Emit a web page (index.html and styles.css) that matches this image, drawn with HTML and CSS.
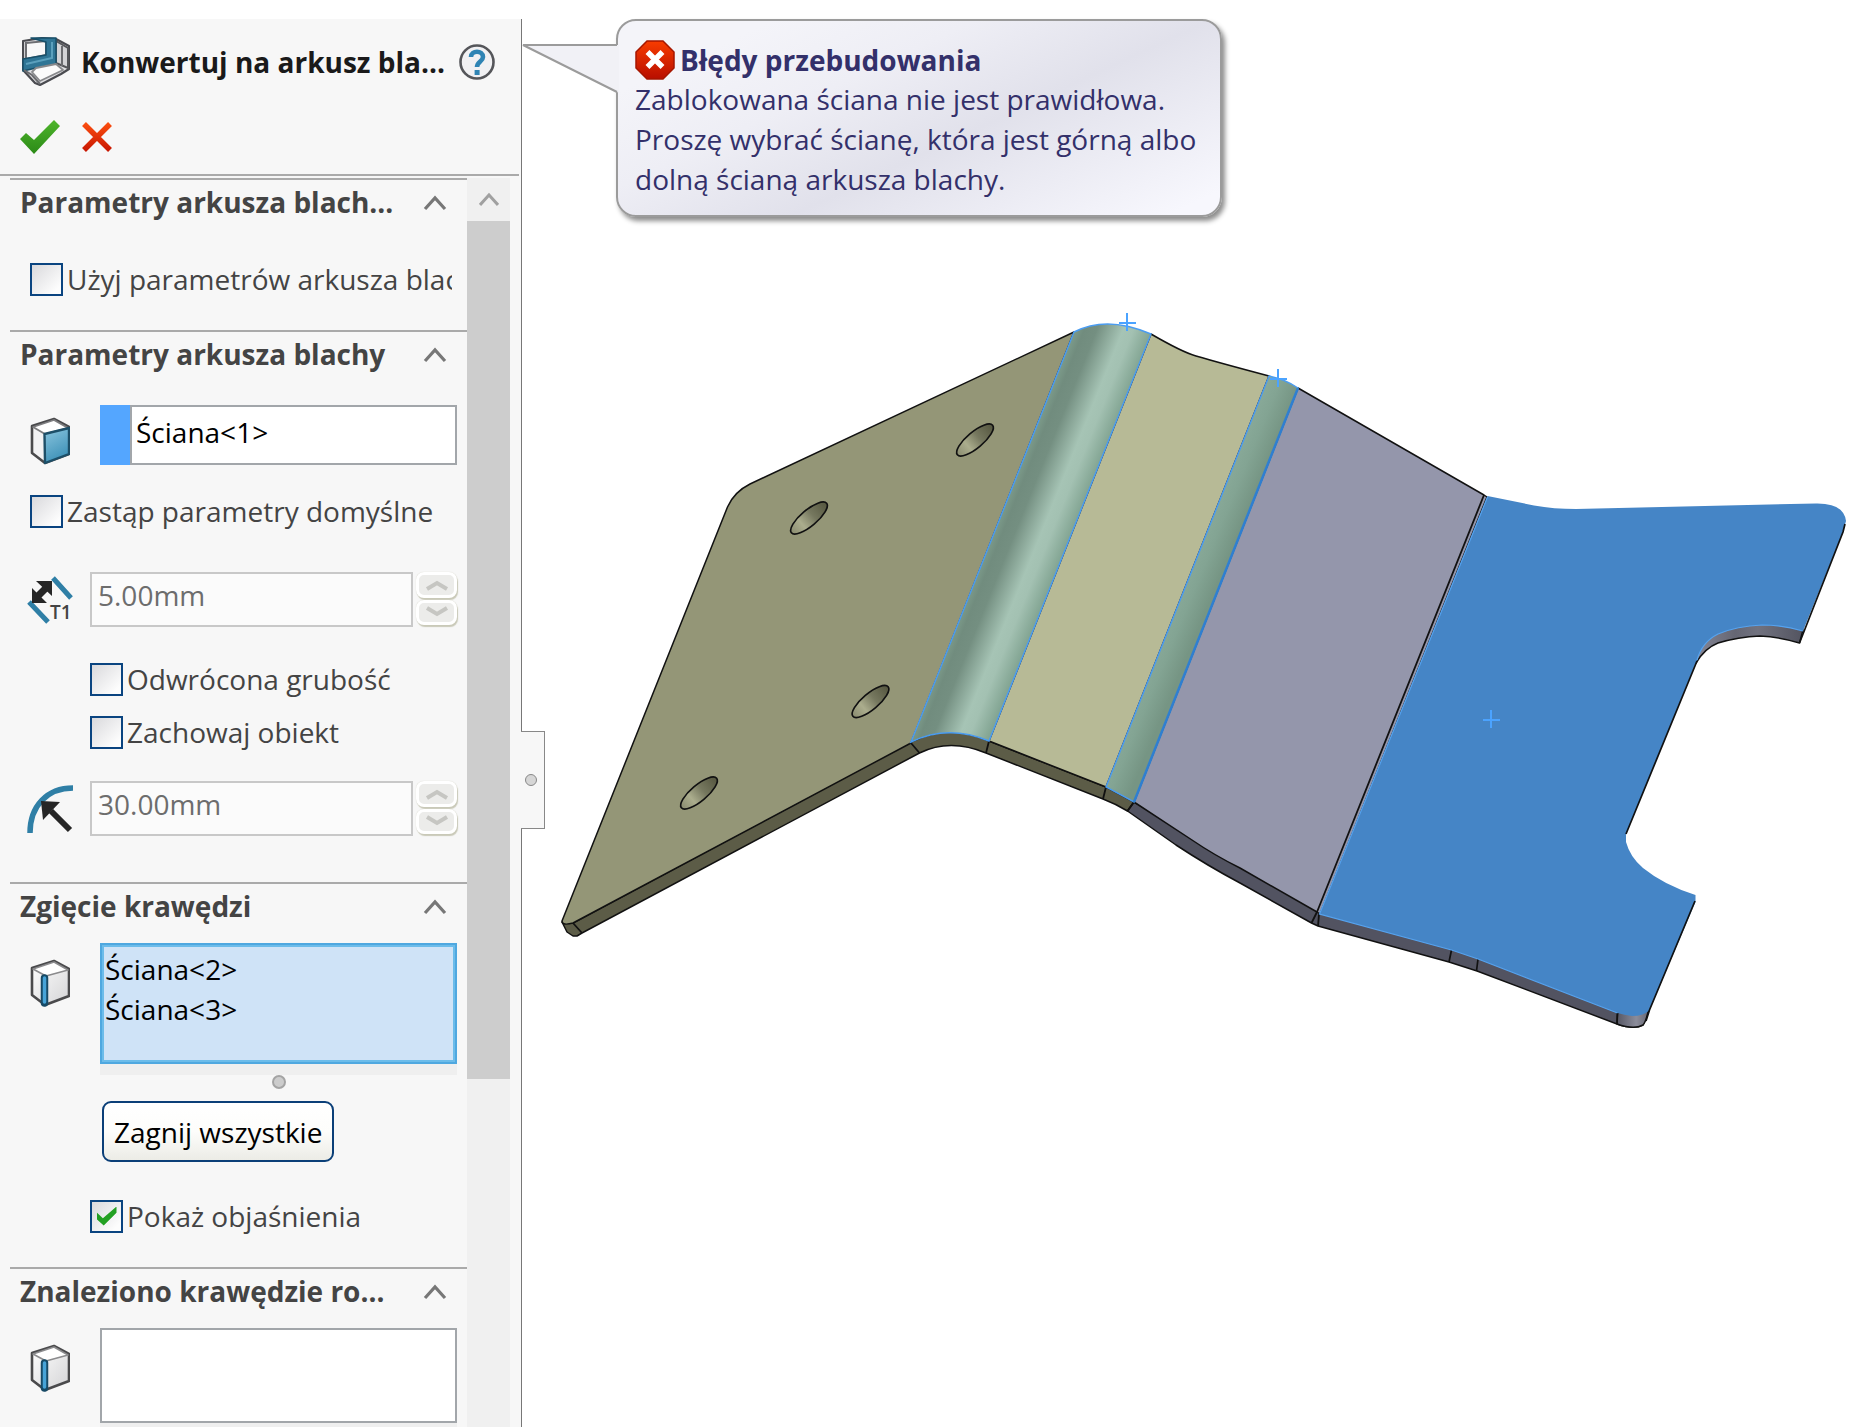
FILE: index.html
```html
<!DOCTYPE html>
<html lang="pl">
<head>
<meta charset="utf-8">
<meta name="viewport" content="width=device-width, initial-scale=1">
<title>Konwertuj na arkusz blachy</title>
<link rel="stylesheet" href="styles.css">
</head>
<body>
<svg width="0" height="0" class="defs" aria-hidden="true">
  <defs>
    <linearGradient id="boxShade" x1="0" y1="0" x2="1" y2="1"><stop offset="0" stop-color="#fff"/><stop offset="1" stop-color="#d4d4d6"/></linearGradient>
    <linearGradient id="faceBlue" x1="0" y1="0" x2="0.4" y2="1"><stop offset="0" stop-color="#8cc6df"/><stop offset="1" stop-color="#3f92b8"/></linearGradient>
    <symbol id="edgeBox" viewBox="0 0 40 48">
      <path d="M2 9 L24 2 L39 10 V37 L15 46 L2 36 Z" fill="url(#boxShade)" stroke="#4a4a4c" stroke-width="2.6" stroke-linejoin="round"/>
      <path d="M3 10 L16 17 L38 11 L24 3 Z" fill="#fff" stroke="#8b8b8d" stroke-width="1.6" stroke-linejoin="round"/>
      <path d="M14.500 19 V44" stroke="#174a66" stroke-width="7.500" stroke-linecap="round"/>
      <path d="M14.500 19 V43" stroke="#47a4d8" stroke-width="3.500" stroke-linecap="round"/>
    </symbol>
    <symbol id="chevUp" viewBox="0 0 24 16"><path d="M2 14 L12 3 L22 14" fill="none" stroke="currentColor" stroke-width="3.200"/></symbol>
    <symbol id="spinUp" viewBox="0 0 24 12"><path d="M2 10 L12 4 L22 10" fill="none" stroke="currentColor" stroke-width="4"/></symbol>
    <symbol id="spinDown" viewBox="0 0 24 12"><path d="M2 2 L12 8 L22 2" fill="none" stroke="currentColor" stroke-width="4"/></symbol>
  </defs>
</svg>
<div class="app">
  <aside class="panel">
    <header class="panel-head">
      <div class="title-row">
        <svg class="feature-icon" viewBox="0 0 48 50" aria-hidden="true">
          <path d="M1 4 L20 1 L34 2 L47 9 V32 L39 37 L18 48 L13 46 L1 33 Z" fill="#dfdfe2" stroke="#4a4b50" stroke-width="2.200" stroke-linejoin="round"/>
          <path d="M4 6 L24 4 V18 L4 22 Z" fill="#f8f8f8" stroke="#6d6e72" stroke-width="2"/>
          <path d="M34 4 L46 11 V31 L34 26 Z" fill="#d3d3d6" stroke="#55565a" stroke-width="2"/>
          <path d="M40 9 V29" stroke="#6b6c70" stroke-width="2"/>
          <path d="M9 1 L34 1 V27 L14 31 L1 34 V22 L24 18 V5 Z" fill="#2f7595" stroke="#174f69" stroke-width="1.500" stroke-linejoin="round"/>
          <path d="M30 5 V21 L4 27" fill="none" stroke="#5ba0bd" stroke-width="2"/>
          <path d="M14 31 L34 27 L41 33 L18 44 L10 35 Z" fill="#fbfbfb" stroke="#88898c" stroke-width="1.800" stroke-linejoin="round"/>
          <path d="M2 33 L10 38 L18 47" fill="none" stroke="#6a6b6f" stroke-width="2"/>
        </svg>
        <h1>Konwertuj na arkusz bla...</h1>
        <button type="button" class="icon-btn" aria-label="Pomoc">
          <svg width="36" height="38" viewBox="0 0 36 38"><circle cx="18" cy="19" r="16.500" fill="#f1f1f3" stroke="#55565a" stroke-width="2.600"/><path d="M12 14 C12 7 24 7 24 14 C24 18.500 18 18.500 18 24" fill="none" stroke="#2f84b4" stroke-width="4.600"/><rect x="15.600" y="27" width="5" height="5" fill="#2f84b4"/></svg>
        </button>
      </div>
      <div class="actions">
        <button type="button" class="icon-btn" aria-label="OK"><svg width="41" height="34" viewBox="0 0 41 34"><defs><linearGradient id="ok" x1="0" y1="0" x2="0" y2="1"><stop offset="0" stop-color="#4fb52c"/><stop offset="1" stop-color="#2b8a17"/></linearGradient></defs><path d="M0 19 L6 13 L14 20 L34 0 L40 6 L14 34 Z" fill="url(#ok)"/></svg></button>
        <button type="button" class="icon-btn" aria-label="Anuluj"><svg width="32" height="32" viewBox="0 0 32 32"><defs><linearGradient id="no" gradientUnits="userSpaceOnUse" x1="0" y1="0" x2="0" y2="32"><stop offset="0" stop-color="#ff5210"/><stop offset="1" stop-color="#c41200"/></linearGradient></defs><path d="M3 3 L29 29 M29 3 L3 29" stroke="url(#no)" stroke-width="5.500"/></svg></button>
      </div>
    </header>
    <div class="panel-body">
      <div class="groups">
        <section class="group">
          <div class="group-head"><h2>Parametry arkusza blach...</h2><button type="button" class="icon-btn chev" aria-label="Zwiń"><svg width="24" height="16"><use href="#chevUp"/></svg></button></div>
          <label class="check first"><input type="checkbox"><span>Użyj parametrów arkusza blachy</span></label>
        </section>

        <section class="group params">
          <div class="group-head"><h2>Parametry arkusza blachy</h2><button type="button" class="icon-btn chev" aria-label="Zwiń"><svg width="24" height="16"><use href="#chevUp"/></svg></button></div>
          <div class="field pick">
            <svg class="field-icon" width="40" height="48" viewBox="0 0 40 48" aria-hidden="true">
              <path d="M2 9 L24 2 L39 10 V37 L15 46 L2 36 Z" fill="#f2f2f3" stroke="#4a4a4c" stroke-width="2.6" stroke-linejoin="round"/>
              <path d="M3 10 L15 17 L38 11 L24 3 Z" fill="#fff" stroke="#7d7d7f" stroke-width="1.8" stroke-linejoin="round"/>
              <path d="M14.500 17 L39 11 V37 L15 46 Z" fill="url(#faceBlue)" stroke="#1d4f68" stroke-width="2.4" stroke-linejoin="round"/>
            </svg>
            <div class="picked"><span class="swatch"></span><input type="text" aria-label="Stała ściana" value="Ściana&lt;1&gt;"></div>
          </div>
          <label class="check override"><input type="checkbox"><span>Zastąp parametry domyślne</span></label>
          <div class="field number">
            <svg class="field-icon" width="46" height="48" viewBox="0 0 46 48" aria-hidden="true">
              <path d="M26 2 L44 22 M2 26 L21 46" stroke="#2f7fa6" stroke-width="5" fill="none"/>
              <path d="M8 23 L21 10" stroke="#262626" stroke-width="7"/>
              <path d="M9 5 L25 5 L25 20 Z M5 12 V27 L20 27 Z" fill="#262626"/>
              <text x="23" y="43" class="icon-text">T1</text>
            </svg>
            <input type="text" aria-label="Grubość" value="5.00mm" disabled>
            <div class="spin"><button type="button" disabled aria-label="Więcej"><svg width="24" height="12"><use href="#spinUp"/></svg></button><button type="button" disabled aria-label="Mniej"><svg width="24" height="12"><use href="#spinDown"/></svg></button></div>
          </div>
          <label class="check inset reverse"><input type="checkbox"><span>Odwrócona grubość</span></label>
          <label class="check inset keep"><input type="checkbox"><span>Zachowaj obiekt</span></label>
          <div class="field number radius">
            <svg class="field-icon" width="46" height="50" viewBox="0 0 46 50" aria-hidden="true">
              <path d="M3 49 C3 22 20 4 46 4" fill="none" stroke="#2f7fa6" stroke-width="5.500"/>
              <path d="M43 46 L24 27" stroke="#262626" stroke-width="6"/><path d="M14 17 L33 18 L16 36 Z" fill="#262626"/>
            </svg>
            <input type="text" aria-label="Promień" value="30.00mm" disabled>
            <div class="spin"><button type="button" disabled aria-label="Więcej"><svg width="24" height="12"><use href="#spinUp"/></svg></button><button type="button" disabled aria-label="Mniej"><svg width="24" height="12"><use href="#spinDown"/></svg></button></div>
          </div>
        </section>

        <section class="group bends">
          <div class="group-head"><h2>Zgięcie krawędzi</h2><button type="button" class="icon-btn chev" aria-label="Zwiń"><svg width="24" height="16"><use href="#chevUp"/></svg></button></div>
          <div class="field list">
            <svg class="field-icon" width="40" height="48" aria-hidden="true"><use href="#edgeBox"/></svg>
            <div class="list-wrap">
              <ul class="listbox active"><li>Ściana&lt;2&gt;</li><li>Ściana&lt;3&gt;</li></ul>
              <div class="grip"></div><span class="dot"></span>
            </div>
          </div>
          <button type="button" class="push">Zagnij wszystkie</button>
          <label class="check inset callouts"><input type="checkbox" checked><span>Pokaż objaśnienia</span></label>
        </section>

        <section class="group rips">
          <div class="group-head"><h2>Znaleziono krawędzie ro...</h2><button type="button" class="icon-btn chev" aria-label="Zwiń"><svg width="24" height="16"><use href="#chevUp"/></svg></button></div>
          <div class="field list">
            <svg class="field-icon" width="40" height="48" aria-hidden="true"><use href="#edgeBox"/></svg>
            <div class="list-wrap"><ul class="listbox"></ul><div class="grip short"></div></div>
          </div>
        </section>
      </div>
      <div class="scroll"><button type="button" class="scroll-up" aria-label="W górę"><svg width="20" height="16" viewBox="0 0 20 16"><path d="M1 13 L10 3 L19 13" fill="none" stroke="#a0a0a0" stroke-width="3"/></svg></button><div class="thumb"></div></div>
    </div>
    <div class="tab"><span class="tab-dot"></span></div>
  </aside>

  <main class="canvas">
    <svg class="model" viewBox="522 19 1333 1408" role="img" aria-label="Model arkusza blachy">
      <defs>
        <linearGradient id="bendA" gradientUnits="userSpaceOnUse" x1="1074" y1="332" x2="1141" y2="359"><stop offset="0" stop-color="#7c9b8a"/><stop offset=".12" stop-color="#718c7e"/><stop offset=".28" stop-color="#748f81"/><stop offset=".62" stop-color="#a6c4b5"/><stop offset=".75" stop-color="#a3c1b2"/><stop offset="1" stop-color="#83a593"/></linearGradient>
        <linearGradient id="bendB" gradientUnits="userSpaceOnUse" x1="1269" y1="376" x2="1298" y2="388"><stop offset="0" stop-color="#88a998"/><stop offset=".4" stop-color="#83a493"/><stop offset="1" stop-color="#769584"/></linearGradient>
        <linearGradient id="hole"><stop offset="0" stop-color="#8a8c70"/><stop offset=".3" stop-color="#abad8d"/><stop offset=".6" stop-color="#76785f"/><stop offset="1" stop-color="#55563f"/></linearGradient>
        <linearGradient id="notch"><stop offset="0" stop-color="#8b8c9c"/><stop offset=".4" stop-color="#656673"/><stop offset=".6" stop-color="#71727f"/><stop offset="1" stop-color="#535460"/></linearGradient>
        <linearGradient id="corner"><stop offset="0" stop-color="#565764"/><stop offset=".6" stop-color="#8b8c9a"/><stop offset="1" stop-color="#666773"/></linearGradient>
      </defs>
      <g stroke="#111" stroke-width="1.500" stroke-linejoin="round">
        <path fill="#5c5c47" d="M562 922 L567 932 L573 936 H577 L582 933 L919.500 753 Q950 738 986 753 L1103 799 Q1116 804 1127.500 811 L1134 802 L1106 787 L989 741 Q948 723 911 742 L573 923 Z"/>
        <path fill="#525361" d="M1134 802 L1127.500 811 L1176 845 Q1208 866 1240 883 L1311.500 923 L1318 926 L1449 962 L1477 971 L1617 1024 Q1634 1030 1643 1025 L1649 1010 L1478 950 L1317 905 Z"/>
        <path fill="url(#corner)" d="M1617.500 1012 L1617 1024 Q1634 1030 1643 1025 Q1646 1022 1649 1008 Z"/>
        <path fill="url(#notch)" d="M1803 630 L1799.500 643 Q1780 637 1760 636 Q1738 637 1718 643 Q1705 648 1696 663 L1690 640 L1730 615 H1780 Z"/>
        <path fill="#949677" d="M1074 332 L750 484 Q734 492 727.500 507 L562 921 Q562 926 573 923 L911 743 Z"/>
        <path fill="#b7ba96" d="M1151 334 Q1182 352 1196 356 Q1220 363 1269 376 L1106 787 L989 741 Z"/>
        <path fill="#9496ab" d="M1298 388 L1484 495 L1487 497 L1320 914 L1317 912 L1240 868 Q1214 855 1192 840 L1134 802 Z"/>
      </g>
      <path fill="none" stroke="#111" stroke-width="1.800" d="M1484 495 L1317 912 M573 923 L582 933 M911 743 L919.500 753 M989 741 L986 753 M1106 787 L1103 799 M1134 802 L1127.500 811 M1317 912 L1311.500 923 M1319 914 L1318 926"/>
      <path fill="#4585c6" d="M1487.500 496 L1534 505.500 Q1554 509 1576 509 L1816 503.500 Q1844 503 1846 521 L1843 532 L1803 631 Q1782 625 1762 625 Q1737 626 1718 634 Q1702 642 1697 660 L1626 834 V842 Q1630 857 1643 868 Q1664 885 1695.500 895 V902 L1649.500 1010 Q1644 1016 1632 1016 Q1624 1015 1617.500 1013 L1478 959 L1451.500 950 L1319.500 914 Z"/>
      <path fill="none" stroke="#111" stroke-width="1.700" d="M1845 524 L1843 532 L1799.500 643 M1697 661 L1626 834 M1695 901 L1649.500 1010 L1646 1021 M1617.500 1013 L1617 1024 M1478 959 L1476.500 971 M1451.500 950 L1449 962"/>
      <path fill="none" stroke="#56a3ef" stroke-width="1.200" d="M1487.500 497 L1319.500 914 L1451.500 950 L1478 959 L1617.500 1013 M1803 631 Q1782 625 1762 625 Q1737 626 1718 634 Q1702 642 1697 660"/>
      <path fill="url(#bendA)" stroke="#4b9cf0" stroke-width="1.500" d="M1074 332 Q1107 315 1151 334 L989 741 Q948 724 911 742 Z"/>
      <path fill="url(#bendB)" stroke="#4b9cf0" stroke-width="1.500" d="M1269 376 Q1285 379 1298 388 L1134 802 L1106 787 Z"/>
      <path stroke="#2f7fd0" stroke-width="2.500" d="M1298 388 L1134 802"/>
      <g fill="url(#hole)" stroke="#111" stroke-width="1.700">
        <ellipse cx="975" cy="440" rx="23" ry="8" transform="rotate(-40 975 440)"/>
        <ellipse cx="809" cy="518" rx="23" ry="8" transform="rotate(-40 809 518)"/>
        <ellipse cx="870.500" cy="701.500" rx="23" ry="8" transform="rotate(-40 870.500 701.500)"/>
        <ellipse cx="699" cy="793" rx="23" ry="8" transform="rotate(-40 699 793)"/>
      </g>
      <path fill="none" stroke="#4ba3ff" stroke-width="2" d="M1119 323 h17 M1127 313 v18 M1270 379 h17 M1278 369 v18 M1483 720 h17 M1491 710 v18"/>
    </svg>
    <div class="callout" role="alert">
      <svg class="tail" viewBox="0 0 98 52" width="98" height="52" aria-hidden="true"><path d="M98 2 H2 L98 50 Z" fill="#f1f1f6"/><path d="M96 2 H2 L96 49" fill="none" stroke="#9b9b9b" stroke-width="2"/></svg>
      <div class="callout-title">
        <svg width="40" height="40" viewBox="0 0 40 40" aria-hidden="true"><defs><linearGradient id="err" x1="0" y1="0" x2="0" y2="1"><stop offset="0" stop-color="#f83c00"/><stop offset="1" stop-color="#b80e00"/></linearGradient></defs><path d="M12 1 H28 L39 12 V28 L28 39 H12 L1 28 V12 Z" fill="url(#err)" stroke="#a51600" stroke-width="1.500"/><path d="M12.500 12 L27.500 27 M27.500 12 L12.500 27" stroke="#fff" stroke-width="5.500"/></svg>
        <strong>Błędy przebudowania</strong>
      </div>
      <p>Zablokowana ściana nie jest prawidłowa.<br>Proszę wybrać ścianę, która jest górną albo<br>dolną ścianą arkusza blachy.</p>
    </div>
  </main>
</div>
</body>
</html>
```
FILE: styles.css
```css
* { box-sizing: border-box; }

body {
  margin: 0;
  background: #fff;
  font: 28px/40px "Open Sans", "Noto Sans", sans-serif;
  color: #444;
}

h1, h2, p, ul { margin: 0; padding: 0; font-size: inherit; }
ul { list-style: none; }
button, input { font: inherit; color: inherit; }
svg { display: block; flex: none; }
.defs { position: absolute; }

.app {
  display: flex;
  min-height: 100vh;
  padding-top: 19px;
}

/* property panel */
.panel {
  position: relative;
  display: flex;
  flex-direction: column;
  flex: none;
  width: 522px;
  background: #f7f7f7;
  border-right: 1px solid #777;
}

.panel-head {
  height: 157px;
  margin-right: 2px;
  padding: 18px 24px 0 22px;
  border-bottom: 2px solid #aaa;
}

.title-row { display: flex; align-items: center; height: 50px; }
.feature-icon { width: 48px; height: 50px; }
.title-row h1 {
  flex: 1;
  min-width: 0;
  margin-left: 11px;
  color: #1a1a1a;
  font-size: 28px;
  font-weight: 700;
  white-space: nowrap;
}

.icon-btn { padding: 0; border: 0; background: none; color: #777; }
.chev { padding-top: 2px; }
.actions { display: flex; align-items: center; gap: 20px; margin: 33px 0 0 -2px; }

.panel-body { display: flex; flex: 1; padding: 2px 11px 0 10px; }
.groups { flex: 1; min-width: 0; }

.group { border-top: 2px solid #aaa; padding-bottom: 31px; }
.group-head {
  display: flex;
  justify-content: space-between;
  align-items: center;
  height: 42px;
  padding: 2px 20px 0 10px;
}
.group-head h2 { font-weight: 700; white-space: nowrap; }

.params { padding-bottom: 46px; }
.rips { padding-bottom: 0; }

.check {
  display: flex;
  align-items: center;
  height: 40px;
  margin: 0 15px 0 20px;
  gap: 4px;
  overflow: hidden;
  white-space: nowrap;
}
.check.inset { margin-left: 80px; }
.check input {
  appearance: none;
  flex: none;
  width: 33px;
  height: 33px;
  margin: 0;
  border: 2px solid #0a4480;
  background: linear-gradient(135deg, #d9d9dc, #fdfdfd 85%);
}
.check input:checked {
  display: grid;
  place-items: center;
}
.check input:checked::before {
  content: "";
  width: 20px;
  height: 19px;
  background: #22a022;
  clip-path: polygon(0 30%, 32% 62%, 100% 0, 100% 33%, 36% 100%, 0 66%);
}
.check.first { margin-top: 37px; }
.check.override { margin-top: 26px; }
.check.reverse { margin-top: 32px; }
.check.keep { margin-top: 13px; }
.check.callouts { margin-top: 34px; }

.field { display: flex; margin: 0 10px 0 20px; }
.field-icon { margin-right: 30px; }

.pick { margin-top: 31px; align-items: flex-end; }
.picked { display: flex; flex: 1; height: 60px; min-width: 0; }
.swatch { flex: 0 0 30px; background: #54a6ff; }
.picked input {
  flex: 1;
  min-width: 0;
  height: 60px;
  padding: 0 4px 6px;
  border: 2px solid #a2a6aa;
  background: #fff;
  color: #000;
}

.number { height: 55px; margin-top: 41px; margin-left: 17px; }
.number .field-icon { margin-right: 17px; align-self: center; }
.number.radius { margin-top: 29px; }
.number input {
  flex: 1;
  min-width: 0;
  padding: 0 6px 9px;
  border: 2px solid #c8c8c8;
  background: #fbfbfb;
  color: #6d6d6d;
}
.icon-text { font: 600 19px "Open Sans", sans-serif; fill: #444; }

.spin { display: flex; flex-direction: column; gap: 2px; margin-left: 3px; padding-bottom: 2px; }
.spin button {
  display: grid;
  place-items: center;
  flex: 1;
  width: 41px;
  padding: 0;
  border: 3px solid #fff;
  border-radius: 8px;
  background: #ececea;
  box-shadow: 1px 2px 1px #c9c9b8, 0 0 1px #d0d0c4;
  color: #c6c6c2;
}

.list { margin-top: 17px; }
.list .field-icon { margin-top: 16px; }
.list-wrap { flex: 1; min-width: 0; }
.listbox {
  height: 95px;
  border: 2px solid #a2a6aa;
  background: #fff;
}
.listbox.active {
  height: 121px;
  padding: 2px 0 0 1px;
  border: 4px solid #6cbcea;
  outline: 2px solid #4fa8e0;
  outline-offset: -2px;
  background: #cfe3f7;
  color: #000;
}
.grip { height: 11px; background: #efefef; }
.grip.short { height: 5px; }
.dot {
  display: block;
  width: 14px;
  height: 14px;
  margin: 0 auto;
  border: 2px solid #a4a4a4;
  border-radius: 50%;
  background: #ccc;
}

.push {
  display: block;
  height: 61px;
  margin: 12px 0 0 92px;
  padding: 0 10px;
  border: 2px solid #0b3f78;
  border-radius: 9px;
  background: linear-gradient(#fff, #fdfdfb 50%, #ecece6);
  color: #000;
  white-space: nowrap;
}

.scroll { flex: 0 0 43px; background: #f0f0f0; }
.scroll-up {
  display: grid;
  place-items: center;
  width: 43px;
  height: 43px;
  padding: 0;
  border: 0;
  background: #f0f0f0;
}
.thumb { height: 858px; background: #cdcdcd; }

/* handle that hangs over the drawing area */
.tab {
  position: absolute;
  top: 712px;
  right: -24px;
  z-index: 1;
  display: grid;
  place-items: center;
  width: 24px;
  height: 98px;
  border: 1px solid #888;
  border-left: 0;
  background: #f7f7f7;
}
.tab-dot {
  width: 12px;
  height: 12px;
  margin-right: 4px;
  border: 1px solid #888;
  border-radius: 50%;
  background: #d6d6d6;
}

/* drawing area */
.canvas { position: relative; flex: 1; min-width: 0; }
.model { width: 100%; height: auto; }

.callout {
  position: absolute;
  top: 0;
  left: 94px;
  width: 606px;
  padding: 20px 17px 16px;
  border: 2px solid #9b9b9b;
  border-radius: 20px;
  background: linear-gradient(155deg, #f4f4f9 15%, #eeeef5 35%, #e1e1eb 58%, #f7f7fd 95%);
  box-shadow: 3px 4px 5px rgba(0, 0, 0, .45);
  color: #33306a;
  white-space: nowrap;
}
.callout-title { display: flex; align-items: center; gap: 5px; height: 38px; }
.tail { position: absolute; top: 22px; left: -97px; }
```
